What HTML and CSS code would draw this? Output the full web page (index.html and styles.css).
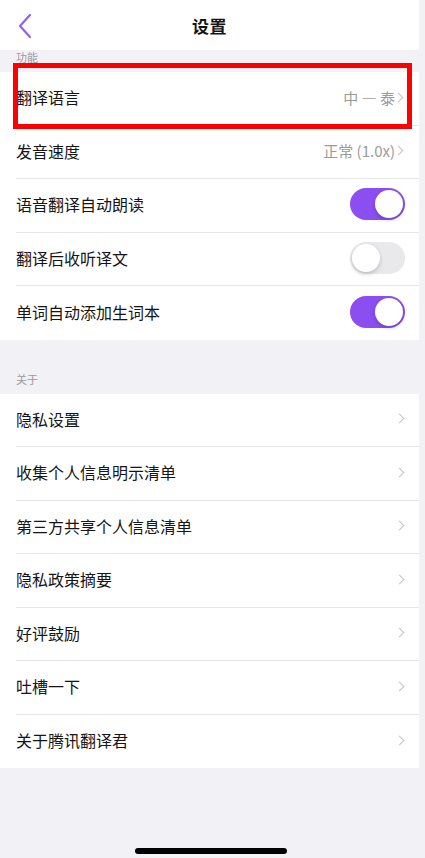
FILE: index.html
```html
<!DOCTYPE html>
<html lang="zh-CN">

<head>
    <meta charset="UTF-8">
    <meta name="viewport" content="width=device-width, initial-scale=1.0">
    <title>设置</title>
    <link rel="stylesheet" href="styles.css">
</head>

<body>
    <div class="pagina">
        <!-- Cabecera -->
        <header class="cabecera">
            <svg class="atras" width="16" height="26" viewBox="0 0 16 26">
                <path d="M13 2 L3 13 L13 24" fill="none" stroke="#9460f0" stroke-width="2.2" stroke-linecap="round" stroke-linejoin="round" />
            </svg>
            <h1>设置</h1>
        </header>

        <div class="seccion seccion-corta">功能</div>
        <ul class="lista">
            <li class="fila">
                <span>翻译语言</span>
                <span class="valor">中 — 泰<i class="flecha"></i></span>
                <div class="marca"></div>
            </li>
            <li class="fila">
                <span>发音速度</span>
                <span class="valor">正常 (1.0x)<i class="flecha"></i></span>
            </li>
            <li class="fila">
                <span>语音翻译自动朗读</span>
                <span class="interruptor activo"></span>
            </li>
            <li class="fila">
                <span>翻译后收听译文</span>
                <span class="interruptor"></span>
            </li>
            <li class="fila">
                <span>单词自动添加生词本</span>
                <span class="interruptor activo"></span>
            </li>
        </ul>

        <div class="seccion">关于</div>
        <ul class="lista">
            <li class="fila"><span>隐私设置</span><i class="flecha sola"></i></li>
            <li class="fila"><span>收集个人信息明示清单</span><i class="flecha sola"></i></li>
            <li class="fila"><span>第三方共享个人信息清单</span><i class="flecha sola"></i></li>
            <li class="fila"><span>隐私政策摘要</span><i class="flecha sola"></i></li>
            <li class="fila"><span>好评鼓励</span><i class="flecha sola"></i></li>
            <li class="fila"><span>吐槽一下</span><i class="flecha sola"></i></li>
            <li class="fila"><span>关于腾讯翻译君</span><i class="flecha sola"></i></li>
        </ul>
    </div>

    <div class="barra-inicio"></div>
</body>

</html>
```

FILE: styles.css
```css
body {
    margin: 0;
    padding: 0;
    background-color: #f2f2f6;
    font-family: "Noto Sans CJK SC", "Noto Sans", sans-serif;
    color: #151515;
    height: 858px;
    overflow: hidden;
    position: relative;
}

.pagina {
    width: 419px;
}

.cabecera {
    height: 50px;
    background-color: #fff;
    display: flex;
    align-items: center;
    justify-content: center;
    position: relative;
}

.atras {
    position: absolute;
    left: 17px;
    top: 13px;
}

h1 {
    margin: 0;
    font-size: 17px;
    font-weight: 700;
    letter-spacing: 0.5px;
}

.seccion {
    height: 54px;
    display: flex;
    align-items: flex-end;
    padding: 0 0 7px 16px;
    box-sizing: border-box;
    font-size: 11px;
    color: #9a9a9e;
}

.seccion-corta {
    height: 22px;
    padding-bottom: 7px;
}

.lista {
    list-style: none;
    margin: 0;
    padding: 0 0 0 16px;
    background-color: #fff;
}

.fila {
    height: 53.5px;
    display: flex;
    align-items: center;
    justify-content: space-between;
    padding-right: 14px;
    padding-bottom: 2px;
    border-bottom: 1px solid #e6e6e8;
    box-sizing: border-box;
    font-size: 16px;
    position: relative;
}

.fila:last-child {
    border-bottom: none;
}

.valor {
    display: flex;
    align-items: center;
    font-size: 15px;
    color: #9b9b9b;
    margin-right: 3px;
}

.flecha {
    display: inline-block;
    width: 6px;
    height: 6px;
    border-top: 1.5px solid #c4c4c8;
    border-right: 1.5px solid #c4c4c8;
    transform: rotate(45deg);
    margin-left: 0;
}

.flecha.sola {
    margin-right: 2px;
}

/* Interruptores */
.interruptor {
    width: 55px;
    height: 32px;
    border-radius: 16px;
    background-color: #e9e9eb;
    position: relative;
}

.interruptor::after {
    content: "";
    position: absolute;
    left: 2px;
    top: 2px;
    width: 28px;
    height: 28px;
    border-radius: 50%;
    background-color: #fff;
    box-shadow: 0 2px 4px rgba(0, 0, 0, 0.2);
}

.interruptor.activo {
    background-color: #8b4ff1;
}

.interruptor.activo::after {
    left: 25px;
}

/* Recuadro rojo de anotación */
.marca {
    position: absolute;
    left: -3px;
    top: -9px;
    width: 399px;
    height: 66px;
    border: 5px solid #f00;
    box-sizing: border-box;
}

.barra-inicio {
    position: absolute;
    left: 135px;
    bottom: 4px;
    width: 152px;
    height: 6px;
    border-radius: 3px;
    background-color: #000;
}
```
